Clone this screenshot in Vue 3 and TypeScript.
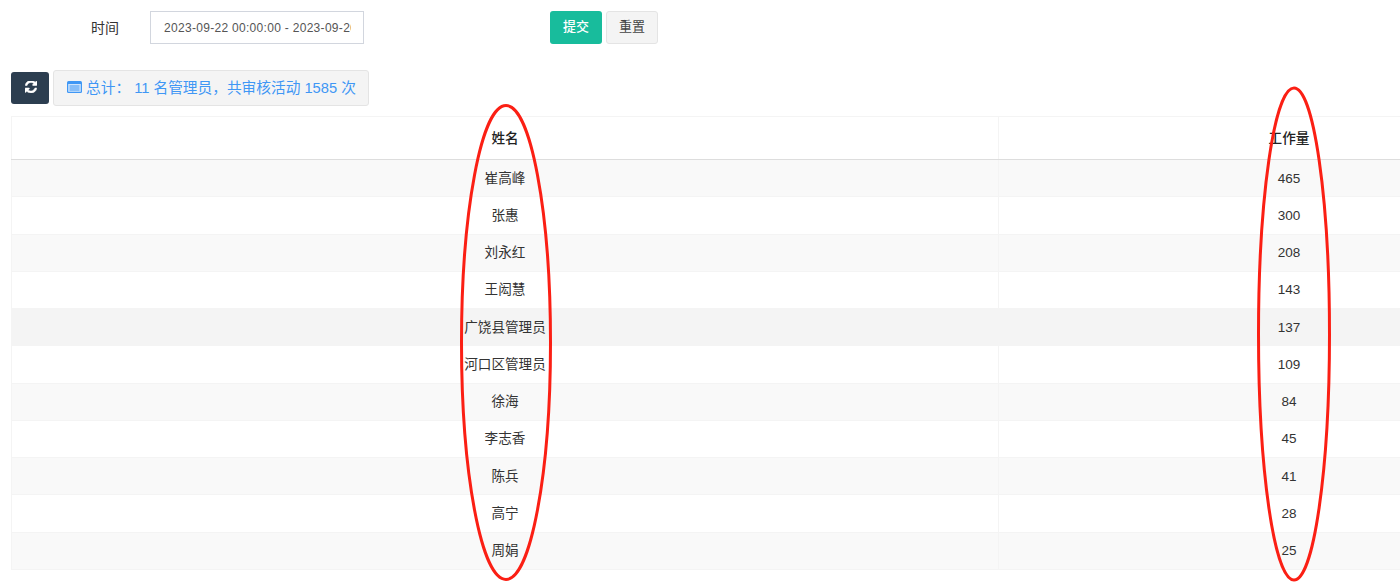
<script setup lang="ts">
interface Row { name: string; count: number }
const rows: Row[] = [
  { name: '崔高峰', count: 465 },
  { name: '张惠', count: 300 },
  { name: '刘永红', count: 208 },
  { name: '王闳慧', count: 143 },
  { name: '广饶县管理员', count: 137 },
  { name: '河口区管理员', count: 109 },
  { name: '徐海', count: 84 },
  { name: '李志香', count: 45 },
  { name: '陈兵', count: 41 },
  { name: '高宁', count: 28 },
  { name: '周娟', count: 25 },
]
const hoveredName = '广饶县管理员'
</script>

<template>
  <div class="page">
    <form class="filter" @submit.prevent>
      <label class="label">时间</label>
      <input class="range" type="text" value="2023-09-22 00:00:00 - 2023-09-26 23:59:59" />
      <button class="btn primary" type="submit">提交</button>
      <button class="btn plain" type="reset">重置</button>
    </form>

    <div class="toolbar">
      <button class="btn dark" type="button" aria-label="刷新">
        <svg class="refresh" viewBox="0 0 1536 1536" width="12" height="12">
          <path fill="#fff" stroke="#fff" stroke-width="70" d="M1511 928q0 5-1 7-64 268-268 434.500t-478 166.500q-146 0-282.500-55t-243.500-157l-129 129q-19 19-45 19t-45-19-19-45v-448q0-26 19-45t45-19h448q26 0 45 19t19 45-19 45l-137 137q71 66 161 102t187 36q134 0 250-65t186-179q11-17 53-117 8-23 30-23h192q13 0 22.500 9.500t9.500 22.500zM1536 64v448q0 26-19 45t-45 19h-448q-26 0-45-19t-19-45 19-45l138-138q-148-137-349-137-134 0-250 65t-186 179q-11 17-53 117-8 23-30 23h-199q-13 0-22.500-9.500t-9.500-22.500v-7q65-268 270-434.500t480-166.500q146 0 284 55.500t245 156.500l130-129q19-19 45-19t45 19 19 45z" />
        </svg>
      </button>
      <div class="summary">
        <svg class="window" viewBox="0 0 15 12" width="15" height="12">
          <rect x="0" y="0" width="15" height="12" rx="1.5" fill="#3f97f5" />
          <rect x="1.2" y="3" width="12.6" height="7.8" fill="#cfe4fc" />
          <path d="M2.5 5h10M2.500 7h10M2.500 9h10" stroke="#3f97f5" stroke-width="1" />
        </svg>
        <span>总计： 11 名管理员，共审核活动 1585 次</span>
      </div>
      <button class="btn plain corner" type="button"></button>
    </div>

    <table class="grid">
      <colgroup>
        <col class="col-name" />
        <col />
      </colgroup>
      <thead>
        <tr>
          <th>姓名</th>
          <th>工作量</th>
        </tr>
      </thead>
      <tbody>
        <tr v-for="row in rows" :key="row.name" :class="{ hovered: row.name === hoveredName }">
          <td class="name">{{ row.name }}</td>
          <td class="count">{{ row.count }}</td>
        </tr>
      </tbody>
    </table>

    <svg class="marks" width="1400" height="583" viewBox="0 0 1400 583">
      <ellipse cx="506" cy="342.500" rx="44.500" ry="237" />
      <ellipse cx="1294" cy="334" rx="35.500" ry="246" />
    </svg>
  </div>
</template>

<style>
html, body {
  margin: 0;
  background: #fff;
  overflow: hidden;
}
</style>

<style scoped>
.page {
  position: relative;
  width: 1400px;
  height: 583px;
  overflow: hidden;
  font-family: "Liberation Sans", "Noto Sans CJK SC", sans-serif;
  font-size: 13px;
  color: #333;
}
.filter {
  display: flex;
  align-items: center;
  height: 33px;
  padding: 11px 0 0 91px;
}
.label {
  width: 59px;
  padding-bottom: 2px;
  font-size: 14px;
}
.range {
  box-sizing: border-box;
  width: 214px;
  height: 33px;
  margin-right: 186px;
  padding: 0 12px 0 13px;
  border: 1px solid #d2d6de;
  border-radius: 0;
  outline: none;
  font: inherit;
  font-size: 12px;
  letter-spacing: 0.3px;
  color: #555;
}
.btn {
  box-sizing: border-box;
  height: 33px;
  padding: 0 0 4px;
  border: 1px solid transparent;
  border-radius: 3px;
  font: inherit;
  font-size: 13px;
}
.primary {
  width: 52px;
  margin-right: 4px;
  background: #18bc9c;
  color: #fff;
  font-weight: 500;
}
.plain {
  width: 52px;
  background: #f4f4f4;
  border-color: #e4e4e4;
  color: #444;
}
.toolbar {
  display: flex;
  align-items: center;
  gap: 4px;
  width: 1569px;
  height: 36px;
  margin: 26px 0 10px 11px;
}
.dark {
  display: flex;
  align-items: center;
  justify-content: center;
  width: 38px;
  height: 32px;
  padding: 0 0 3px 1px;
  background: #2c3e50;
}
.summary {
  box-sizing: border-box;
  display: flex;
  align-items: center;
  gap: 4px;
  height: 36px;
  padding: 0 12px 3px 13px;
  background: #f4f4f4;
  border: 1px solid #e4e4e4;
  border-radius: 3px;
  color: #3f97f5;
  font-size: 14.7px;
  white-space: nowrap;
}
.corner {
  height: 36px;
  margin-left: auto;
  width: 174px;
}
.grid {
  box-sizing: border-box;
  width: 1569px;
  margin-left: 11px;
  border-collapse: collapse;
  table-layout: fixed;
  border: 1px solid #f4f4f4;
}
.col-name {
  width: 987px;
}
th, td {
  box-sizing: border-box;
  padding: 0;
  border: 1px solid #f4f4f4;
  text-align: center;
  font-weight: 400;
}
th {
  height: 43px;
  padding-bottom: 2px;
  border-bottom: 1px solid #ddd;
  font-size: 13.6px;
  font-weight: 500;
  color: #222;
}
td {
  height: 37.27px;
}
td.name {
  padding-bottom: 3px;
  font-size: 13.6px;
}
td.count {
  font-size: 13.5px;
}
tbody tr:nth-child(odd) {
  background: #f9f9f9;
}
tbody tr.hovered {
  background: #f4f4f4;
}
.marks {
  position: absolute;
  left: 0;
  top: 0;
  pointer-events: none;
}
.marks ellipse {
  fill: none;
  stroke: #fb1f14;
  stroke-width: 3;
}
</style>
